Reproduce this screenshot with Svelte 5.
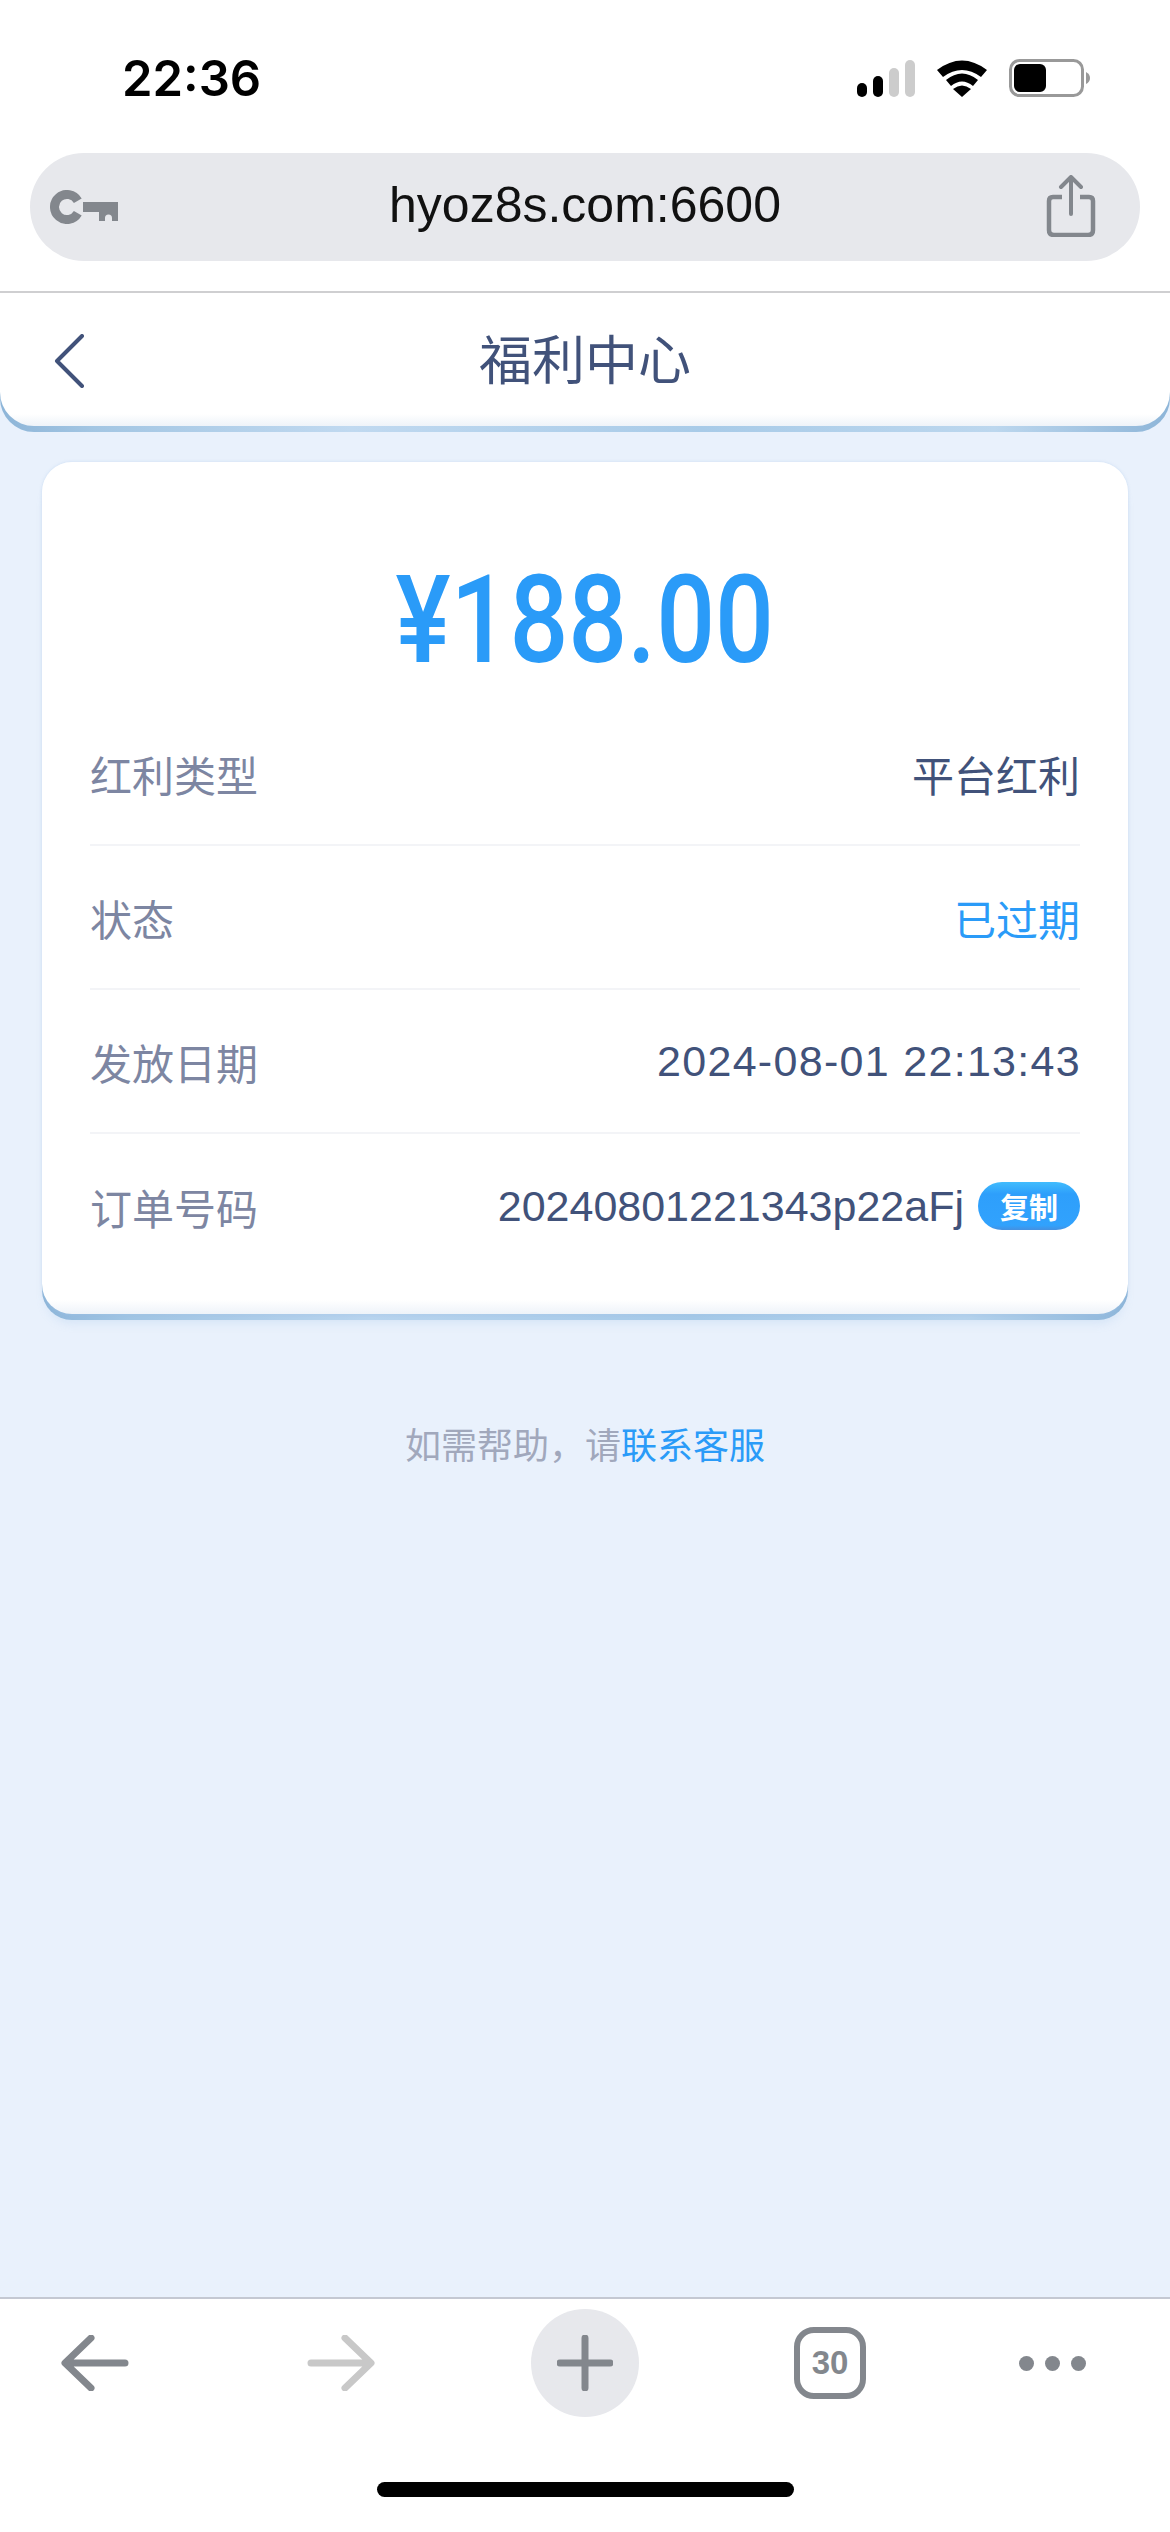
<script lang="ts">
  const rows = [
    { label: '红利类型', value: '平台红利' },
    { label: '状态', value: '已过期', tone: 'blue' },
    { label: '发放日期', value: '2024-08-01 22:13:43', kind: 'date' },
    { label: '订单号码', value: '20240801221343p22aFj', kind: 'order', copy: true }
  ];
</script>

<div class="page">
  <div class="chrome">
    <div class="status">
      <span class="time">22:36</span>
      <div class="status-icons">
        <svg width="60" height="38" viewBox="0 0 60 38">
          <rect x="0" y="24" width="10" height="14" rx="5" fill="#000" />
          <rect x="16" y="17" width="10" height="21" rx="5" fill="#000" />
          <rect x="32" y="9" width="10" height="29" rx="5" fill="#ccc" />
          <rect x="48" y="1" width="10" height="37" rx="5" fill="#ccc" />
        </svg>
        <svg class="wifi" width="52" height="38" viewBox="0 0 52 38">
          <path d="M1 11 Q26 -8 51 11 L45 18 Q26 4 7 18 Z" fill="#000" />
          <path d="M10 21 Q26 8 42 21 L37 27 Q26 18 15 27 Z" fill="#000" />
          <path d="M17 30 Q26 23 35 30 L26 38 Z" fill="#000" />
        </svg>
        <svg class="battery" width="82" height="38" viewBox="0 0 82 38">
          <rect x="1.5" y="1.5" width="72" height="35" rx="9" fill="none" stroke="#999" stroke-width="3" />
          <rect x="5" y="5" width="32" height="28" rx="6" fill="#000" />
          <path d="M77 13 Q81 15 81 19 Q81 23 77 25 Z" fill="#999" />
        </svg>
      </div>
    </div>

    <div class="urlbar">
      <svg width="68" height="34" viewBox="0 0 68 34">
        <path d="M27.8 10.75 A12.5 12.5 0 1 0 27.8 23.25" fill="none" stroke="#83878d" stroke-width="9" />
        <path fill="#83878d" d="M33 12 H68 V31 H62 V28 A3.5 3.5 0 0 0 55 28 V31 H49 V22 H33 Z" />
      </svg>
      <span class="url">hyoz8s.com:6600</span>
      <svg class="share" width="50" height="62" viewBox="0 0 50 62">
        <path d="M25 3 V39 M15 12 L25 2 L35 12" fill="none" stroke="#83878d" stroke-width="4" stroke-linecap="round" stroke-linejoin="round" />
        <path d="M16 22 H7 Q3 22 3 26 V55 Q3 60 8 60 H42 Q47 60 47 55 V26 Q47 22 43 22 H34" fill="none" stroke="#83878d" stroke-width="4.5" />
      </svg>
    </div>
  </div>

  <main class="content">
    <header class="nav">
      <svg class="back" width="32" height="54" viewBox="0 0 32 54">
        <path d="M29 2 L4 27 L29 52" fill="none" stroke="#41527a" stroke-width="4" stroke-linecap="round" stroke-linejoin="round" />
      </svg>
      <h1>福利中心</h1>
    </header>

    <section class="card">
      <div class="amount"><span>¥188.00</span></div>
      {#each rows as row}
        <div class="row">
          <span class="label">{row.label}</span>
          <span class="value" class:blue={row.tone === 'blue'}>
            <span class={row.kind}>{row.value}</span>
            {#if row.copy}<button class="copy">复制</button>{/if}
          </span>
        </div>
      {/each}
    </section>

    <p class="help">如需帮助，请<span class="link">联系客服</span></p>
  </main>

  <footer class="toolbar">
    <div class="tools">
      <svg width="68" height="56" viewBox="0 0 68 56">
        <path d="M64 28 H5 M30 3 L4 28 L30 53" fill="none" stroke="#83878d" stroke-width="7" stroke-linecap="round" stroke-linejoin="round" />
      </svg>
      <svg width="68" height="56" viewBox="0 0 68 56">
        <path d="M4 28 H63 M38 3 L64 28 L38 53" fill="none" stroke="#c8c8c8" stroke-width="7" stroke-linecap="round" stroke-linejoin="round" />
      </svg>
      <div class="plus">
        <svg width="56" height="56" viewBox="0 0 56 56">
          <path d="M28 3 V53 M3 28 H53" fill="none" stroke="#83878d" stroke-width="7" stroke-linecap="round" />
        </svg>
      </div>
      <div class="tabs">30</div>
      <div class="dots"><i></i><i></i><i></i></div>
    </div>
    <div class="home"></div>
  </footer>
</div>

<style>
  :global(body) {
    margin: 0;
    background: #e9f1fc;
  }

  .page {
    width: 1170px;
    height: 2532px;
    display: flex;
    flex-direction: column;
    background: #e9f1fc;
    font-family: "Liberation Sans", "Noto Sans CJK SC", sans-serif;
    overflow: hidden;
  }

  .chrome {
    flex: none;
    height: 291px;
    background: #fff;
  }

  .status {
    height: 153px;
    box-sizing: border-box;
    padding: 52px 79px 0 122px;
    display: flex;
    justify-content: space-between;
    align-items: flex-start;
  }

  .time {
    font-family: Inter, "Liberation Sans", sans-serif;
    font-size: 49px;
    line-height: 54px;
    font-weight: 600;
    color: #000;
  }

  .status-icons {
    display: flex;
    align-items: center;
    margin-top: 7px;
  }

  .wifi { margin-left: 19px; }
  .battery { margin-left: 21px; }

  .urlbar {
    height: 108px;
    margin: 0 30px;
    padding: 0 44px 0 20px;
    display: flex;
    align-items: center;
    justify-content: space-between;
    position: relative;
    background: #e7e8ec;
    border-radius: 54px;
  }

  .share { margin-top: -2px; }

  .url {
    position: absolute;
    left: 0;
    right: 0;
    top: 27px;
    text-align: center;
    font-size: 50px;
    line-height: 50px;
    color: #111;
  }

  .content {
    flex: 1;
    position: relative;
    z-index: 0;
  }

  .nav {
    height: 135px;
    box-sizing: border-box;
    border-top: 2px solid #cfcfd1;
    display: flex;
    align-items: center;
    justify-content: center;
    position: relative;
    background: linear-gradient(to top, #eef3f9, #fff 12px);
    border-radius: 0 0 34px 34px;
  }

  .nav::after,
  .card::after {
    content: "";
    position: absolute;
    z-index: -1;
    left: 0;
    right: 0;
    bottom: -6px;
    height: 60px;
    border-radius: 0 0 34px 34px;
    background: linear-gradient(90deg, #8db5d8, #a3c6e3 8%, #c0d9f0 30%, #a8cbe8 60%, #bcd7ee 85%, #8db5d8);
  }

  .back {
    position: absolute;
    left: 53px;
    top: 41px;
  }

  h1 {
    margin: 0 0 6px;
    font-size: 53px;
    font-weight: 400;
    color: #41527a;
  }

  .card {
    position: relative;
    height: 852px;
    box-sizing: border-box;
    margin: 36px 42px 0;
    padding: 98px 48px 0;
    background: linear-gradient(to top, #eef3f9, #fff 14px);
    border-radius: 30px;
    box-shadow: 0 13px 10px -4px rgba(150, 190, 230, 0.25), 0 0 3px rgba(170, 200, 235, 0.5);
  }

  .card::after {
    height: 60px;
    border-radius: 0 0 30px 30px;
  }

  .amount {
    height: 122px;
    margin-bottom: 20px;
    text-align: center;
    font-family: Roboto, sans-serif;
    font-weight: 500;
    font-size: 122px;
    line-height: 122px;
    color: #2a9bf8;
  }

  .amount span {
    display: inline-block;
    transform: scaleX(0.85);
  }

  .row {
    height: 144px;
    box-sizing: border-box;
    display: flex;
    justify-content: space-between;
    align-items: center;
    border-bottom: 2px solid #f3f4f7;
    font-size: 42px;
  }

  .row:last-child { border-bottom: 0; }

  .label { color: #7d86a2; }

  .value {
    color: #41527a;
    display: flex;
    align-items: center;
  }

  .value.blue { color: #2a9bf8; }

  .date {
    font-size: 43px;
    letter-spacing: 1.3px;
    margin-right: -1px;
  }

  .order { font-size: 43px; }

  .copy {
    margin-left: 14px;
    width: 102px;
    height: 48px;
    padding: 0;
    border: 0;
    border-radius: 24px;
    background: linear-gradient(#41bcfd, #2e9ffb 25%, #31a2fd 90%, #4590e0);
    color: #fff;
    font-size: 29px;
    font-weight: 700;
    font-family: "Noto Sans CJK SC", sans-serif;
  }

  .help {
    margin: 106px 0 0;
    text-align: center;
    font-size: 36px;
    line-height: 54px;
    color: #a1a8bc;
  }

  .link { color: #2a9bf8; }

  .toolbar {
    flex: none;
    height: 235px;
    box-sizing: border-box;
    background: #fff;
    border-top: 2px solid #c4c8d2;
    display: flex;
    flex-direction: column;
    align-items: center;
  }

  .tools {
    width: 100%;
    height: 108px;
    margin-top: 10px;
    display: grid;
    grid-template-columns: 190px 302px 186px 304px 140px;
    align-items: center;
    justify-items: center;
  }

  .plus {
    width: 108px;
    height: 108px;
    border-radius: 50%;
    background: #e7e8ec;
    display: flex;
    align-items: center;
    justify-content: center;
  }

  .tabs {
    box-sizing: border-box;
    width: 72px;
    height: 72px;
    border: 6px solid #83878d;
    border-radius: 20px;
    display: flex;
    align-items: center;
    justify-content: center;
    color: #83878d;
    font-size: 33px;
    font-weight: 700;
  }

  .dots {
    display: flex;
    gap: 11px;
  }

  .dots i {
    width: 15px;
    height: 15px;
    border-radius: 50%;
    background: #83878d;
  }

  .home {
    width: 417px;
    height: 15px;
    margin-top: 65px;
    border-radius: 8px;
    background: #000;
  }
</style>
